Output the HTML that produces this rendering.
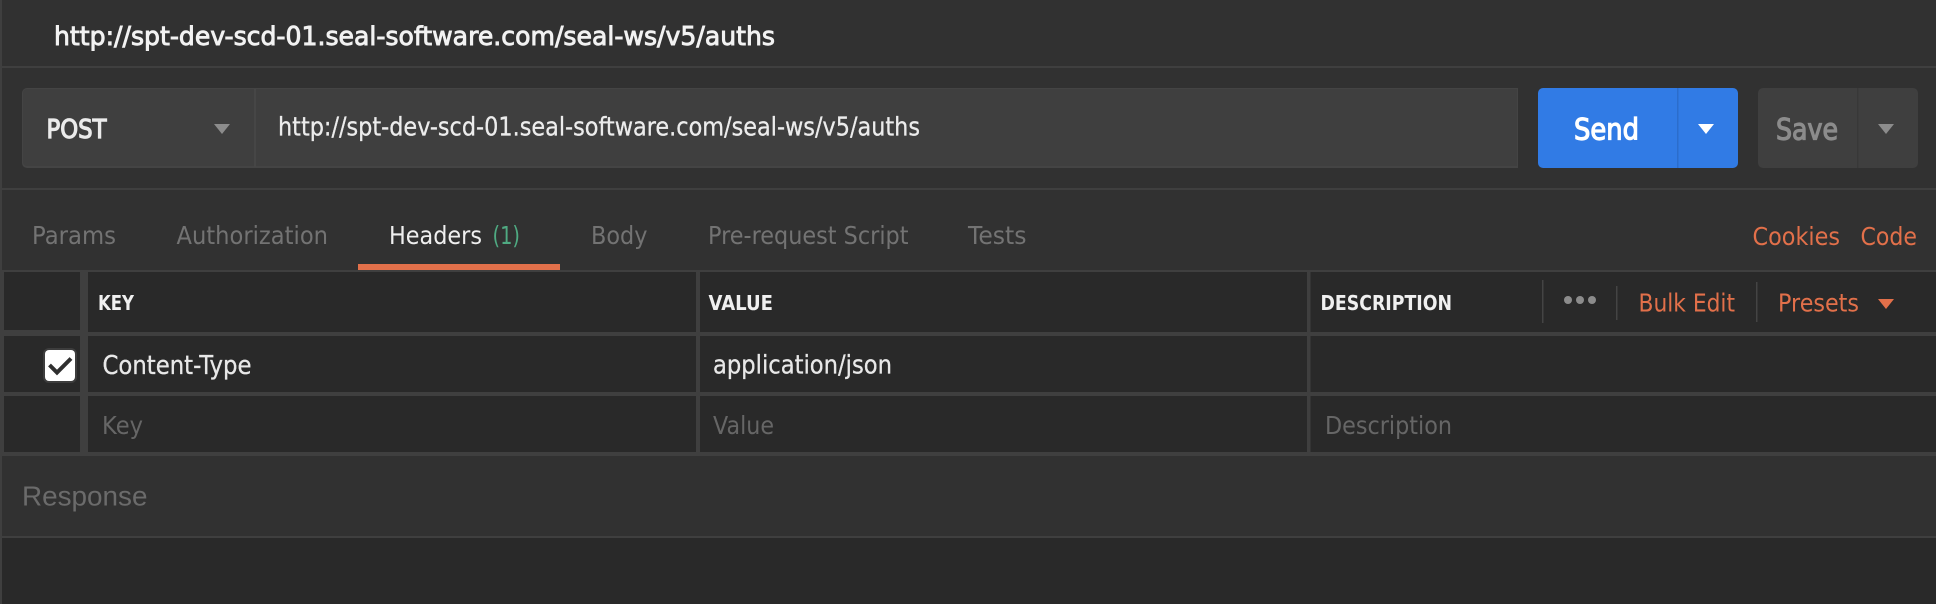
<!DOCTYPE html>
<html><head><meta charset="utf-8"><style>
html,body{margin:0;padding:0;background:#292929;width:1936px;height:604px;overflow:hidden}
svg{display:block}
text{font-family:"DejaVu Sans","Liberation Sans",sans-serif;font-size:25px}
</style></head><body>
<svg width="1936" height="604" viewBox="0 0 1936 604" xmlns="http://www.w3.org/2000/svg">
<rect width="1936" height="604" fill="#292929"/>
<rect x="0" y="0" width="1936" height="270" fill="#313131"/>
<rect x="0" y="456" width="1936" height="80" fill="#313131"/>
<rect x="0" y="0" width="2" height="604" fill="#3f3f3f"/>
<rect x="0" y="66" width="1936" height="2" fill="#3f3f3f"/>
<rect x="0" y="188" width="1936" height="2" fill="#3f3f3f"/>
<rect x="0" y="270" width="1936" height="2" fill="#3f3f3f"/>
<rect x="0" y="536" width="1936" height="2" fill="#3f3f3f"/>
<text x="54" y="45" style="font-size:26px" fill="#f2f2f2" stroke="#f2f2f2" stroke-width=".9" textLength="721" lengthAdjust="spacingAndGlyphs">http://spt-dev-scd-01.seal-software.com/seal-ws/v5/auths</text>
<path d="M27 88H1518V168H27a5 5 0 0 1-5-5V93a5 5 0 0 1 5-5z" fill="#444"/>
<path d="M27 89H1517V166H27a4 4 0 0 1-4-4V93a4 4 0 0 1 4-4z" fill="#3f3f3f"/>
<rect x="254" y="89" width="2" height="78" fill="#464646"/>
<text x="46.500" y="138" style="font-size:26px" fill="#ebebeb" stroke="#ebebeb" stroke-width="1.200" textLength="60" lengthAdjust="spacingAndGlyphs">POST</text>
<path d="M214 124H230L222 134Z" fill="#8c8c8c"/>
<text x="278" y="135.500" style="font-size:26px" fill="#ececec" stroke="#ececec" stroke-width=".3" textLength="642" lengthAdjust="spacingAndGlyphs">http://spt-dev-scd-01.seal-software.com/seal-ws/v5/auths</text>
<rect x="1538" y="88" width="200" height="80" rx="5" fill="#317be5"/>
<rect x="1677" y="88" width="1.500" height="80" fill="#2b6dcc"/>
<text x="1574" y="139.500" style="font-size:29px" fill="#fff" stroke="#fff" stroke-width="1.200" textLength="65" lengthAdjust="spacingAndGlyphs">Send</text>
<path d="M1698 124H1714L1706 134Z" fill="#fff"/>
<rect x="1758" y="88" width="160" height="80" rx="5" fill="#3f3f3f"/>
<rect x="1857" y="88" width="1.500" height="80" fill="#383838"/>
<text x="1776" y="139.500" style="font-size:29px" fill="#8c8c8c" stroke="#8c8c8c" stroke-width="1.200" textLength="62" lengthAdjust="spacingAndGlyphs">Save</text>
<path d="M1878 124H1894L1886 134Z" fill="#8c8c8c"/>
<g fill="#737373">
<text x="32" y="244" textLength="84" lengthAdjust="spacingAndGlyphs">Params</text>
<text x="176.500" y="244" textLength="151.500" lengthAdjust="spacingAndGlyphs">Authorization</text>
<text x="591" y="244" textLength="56.500" lengthAdjust="spacingAndGlyphs">Body</text>
<text x="708" y="244" textLength="200.500" lengthAdjust="spacingAndGlyphs">Pre-request Script</text>
<text x="968" y="244" textLength="58.500" lengthAdjust="spacingAndGlyphs">Tests</text>
</g>
<text x="389" y="244" fill="#efefef" textLength="93" lengthAdjust="spacingAndGlyphs">Headers</text>
<text x="492.500" y="244" fill="#4faa82" textLength="27.500" lengthAdjust="spacingAndGlyphs">(1)</text>
<rect x="358" y="264" width="202" height="6" fill="#e2704a"/>
<text x="1752.500" y="245" fill="#e2704a" textLength="87.500" lengthAdjust="spacingAndGlyphs">Cookies</text>
<text x="1860.500" y="245" fill="#e2704a" textLength="56.500" lengthAdjust="spacingAndGlyphs">Code</text>
<g fill="#3f3f3f">
<rect x="0" y="272" width="4" height="184"/>
<rect x="4" y="330" width="76" height="6"/>
<rect x="88" y="332" width="1848" height="4"/>
<rect x="4" y="392" width="1932" height="4"/>
<rect x="0" y="452" width="1936" height="4"/>
<rect x="80" y="272" width="8" height="180"/>
<rect x="696" y="272" width="4" height="180"/>
<rect x="1307" y="272" width="3.500" height="180"/>
</g>
<rect x="84" y="330" width="4" height="2" fill="#3f3f3f"/>
<g fill="#f0f0f0" font-weight="700">
<text x="98" y="310" style="font-size:20px" textLength="36" lengthAdjust="spacingAndGlyphs">KEY</text>
<text x="708.500" y="310" style="font-size:20px" textLength="64.500" lengthAdjust="spacingAndGlyphs">VALUE</text>
<text x="1320.500" y="310" style="font-size:20px" textLength="131.500" lengthAdjust="spacingAndGlyphs">DESCRIPTION</text>
</g>
<rect x="1542" y="280" width="1.500" height="43" fill="#444"/>
<rect x="1616" y="286" width="1.500" height="34" fill="#444"/>
<rect x="1756" y="282" width="1.500" height="40" fill="#444"/>
<circle cx="1568" cy="300" r="4" fill="#8c8c8c"/>
<circle cx="1580" cy="300" r="4" fill="#8c8c8c"/>
<circle cx="1592" cy="300" r="4" fill="#8c8c8c"/>
<text x="1638.500" y="311.500" fill="#e2704a" textLength="96.500" lengthAdjust="spacingAndGlyphs">Bulk Edit</text>
<text x="1778" y="311.500" fill="#e2704a" textLength="81" lengthAdjust="spacingAndGlyphs">Presets</text>
<path d="M1878 299H1894L1886 309Z" fill="#e2704a"/>
<rect x="43" y="348" width="34" height="35" rx="6" fill="#3d3d3d"/>
<rect x="45" y="350" width="30" height="31" rx="4" fill="#fff"/>
<path d="M49.500 365L57 372.500L71 358.500" fill="none" stroke="#2f2f2f" stroke-width="4"/>
<text x="102.500" y="374" style="font-size:26px" fill="#e8e8e8" stroke="#e8e8e8" stroke-width=".3" textLength="149" lengthAdjust="spacingAndGlyphs">Content-Type</text>
<text x="713" y="373.500" style="font-size:26px" fill="#e8e8e8" stroke="#e8e8e8" stroke-width=".3" textLength="179" lengthAdjust="spacingAndGlyphs">application/json</text>
<text x="102" y="434" fill="#666" textLength="41" lengthAdjust="spacingAndGlyphs">Key</text>
<text x="713" y="434" fill="#666" textLength="61" lengthAdjust="spacingAndGlyphs">Value</text>
<text x="1325" y="434" fill="#666" textLength="127" lengthAdjust="spacingAndGlyphs">Description</text>
<text x="22" y="505.500" style="font-family:'Liberation Sans',sans-serif;font-size:27.500px" fill="#6b6b6b" textLength="125.500" lengthAdjust="spacingAndGlyphs">Response</text>
</svg>
</body></html>
